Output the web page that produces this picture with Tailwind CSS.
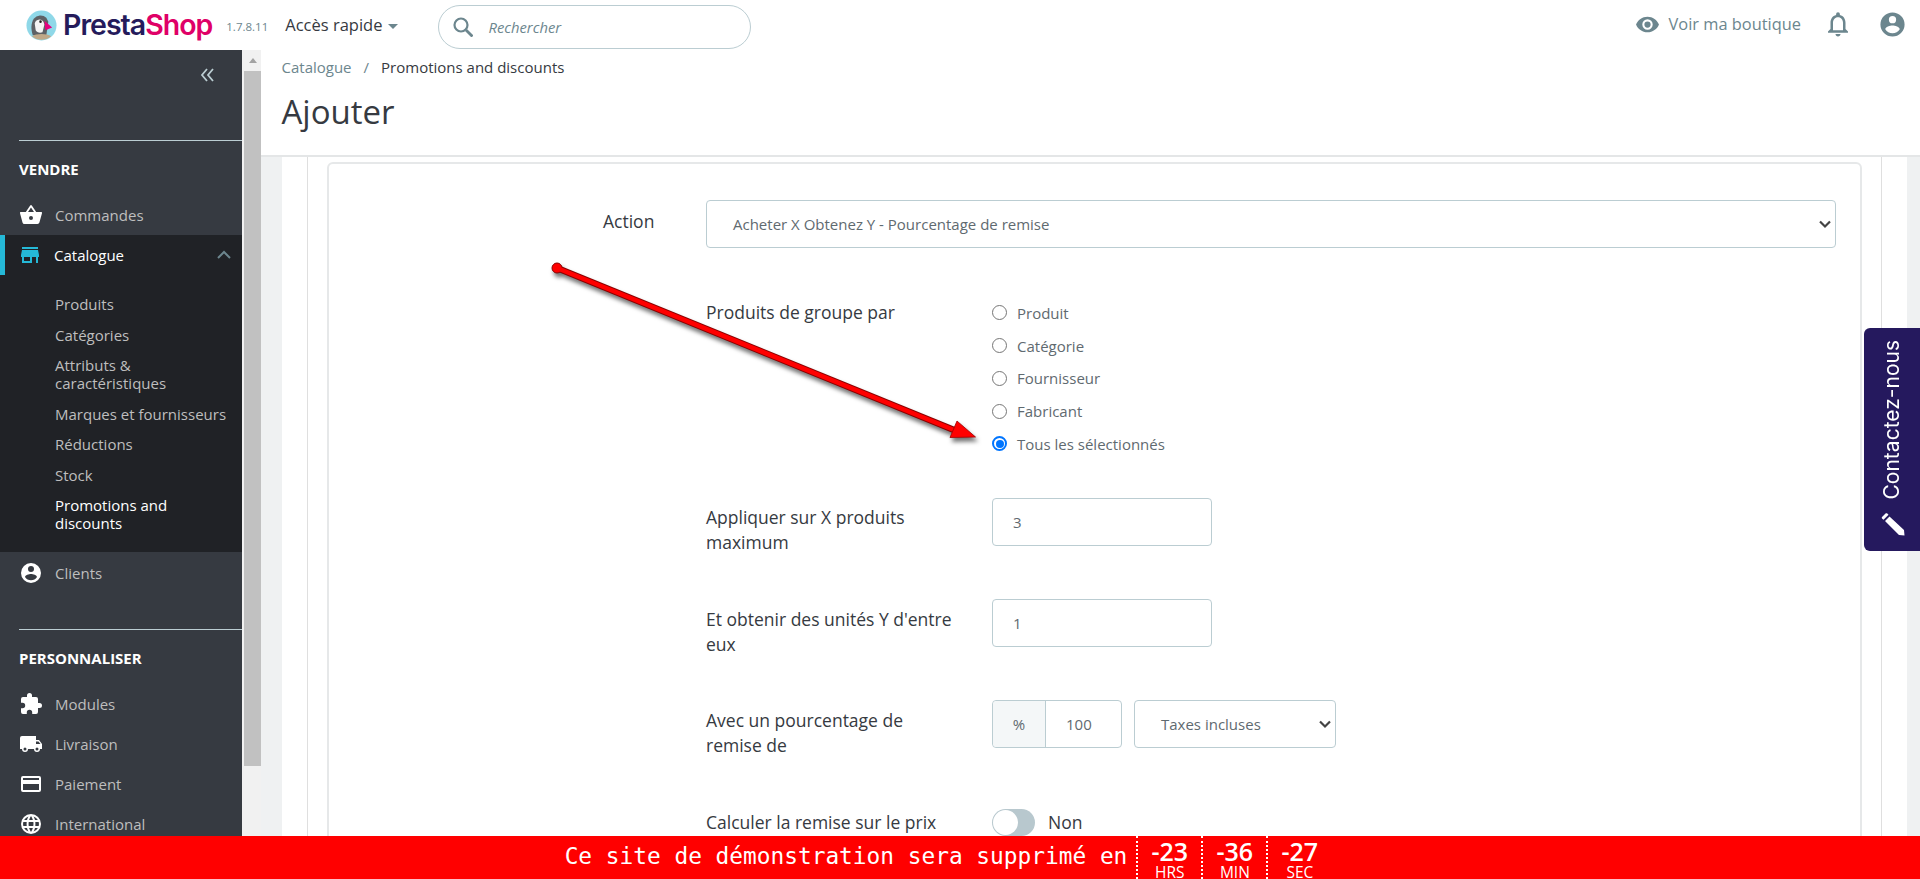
<!DOCTYPE html>
<html lang="fr"><head><meta charset="utf-8">
<script src="https://cdn.jsdelivr.net/npm/@tailwindcss/browser@4"></script>
</head>
<body class="h-[879px] w-[1920px] overflow-hidden bg-white font-['Open_Sans',sans-serif] text-[#363a41]">
<div class="relative flex h-[879px] flex-col overflow-hidden">
<header class="flex h-[50px] shrink-0 items-center bg-white">
  <svg class="ml-[26px] h-[31px] w-[31px]" viewBox="0 0 32 32"><circle cx="16" cy="16" r="15.500" fill="#8fd8e8"/><path d="M7 26c-2-6-2-12 1-17a9 9 0 0 1 13-1l2 4-2 14z" fill="#5d6165"/><path d="M9 14a5 5 0 0 1 9-2l1 3-2 8c-3 1-6 0-7-2z" fill="#f4f4f4"/><circle cx="15" cy="12" r="1.300" fill="#222"/><path d="m19 11 8 7-7 3z" fill="#e6007e"/><path d="M6 27c5-3 15-3 20 0a15.500 15.500 0 0 1-20 0z" fill="#bfa888"/></svg>
  <span class="ml-[6px] font-['Inter',sans-serif] text-[28.500px] leading-none font-semibold tracking-[-1px] text-[#251b5b]">Presta<span class="text-[#df0067]">Shop</span></span>
  <span class="ml-[14px] mt-[4px] text-[11.500px] text-[#6c868e]">1.7.8.11</span>
  <span class="ml-[17px] text-[16.500px] text-[#363a41]">Accès rapide</span>
  <span class="ml-[6px] mt-[2px] h-0 w-0 border-x-[5px] border-t-[5px] border-x-transparent border-t-[#6c868e]"></span>
  <div class="ml-[40px] mt-[4px] flex h-[44px] w-[313px] items-center rounded-[22px] border border-[#bbcdd2]">
    <svg class="ml-[14px] h-[20px] w-[20px]" viewBox="0 0 20 20" fill="none" stroke="#6c868e" stroke-width="2.200"><circle cx="8" cy="8" r="6.500"/><path d="m13 13 6.500 6.500" stroke-width="2.800"/></svg>
    <span class="ml-[15px] text-[14.800px] text-[#6c868e] italic">Rechercher</span>
  </div>
  <div class="ml-auto mt-[-2px] flex items-center">
    <svg class="h-[25px] w-[25px]" viewBox="0 0 24 24" fill="#6c868e"><path d="M12 4.500C7 4.500 2.700 7.600 1 12c1.700 4.400 6 7.500 11 7.500s9.300-3.100 11-7.500c-1.700-4.400-6-7.500-11-7.500zM12 17a5 5 0 1 1 0-10 5 5 0 0 1 0 10zm0-8a3 3 0 1 0 0 6 3 3 0 0 0 0-6z"/></svg>
    <span class="ml-[9px] text-[16.400px] text-[#6c868e]">Voir ma boutique</span>
    <svg class="ml-[22px] h-[30px] w-[30px]" viewBox="0 0 24 24" fill="#6c868e"><path d="M12 22c1.100 0 2-.9 2-2h-4c0 1.100.9 2 2 2zm6-6v-5c0-3.100-1.600-5.600-4.500-6.300V4a1.500 1.500 0 0 0-3 0v.7C7.600 5.400 6 7.900 6 11v5l-2 2v1h16v-1zm-2 1H8v-6c0-2.500 1.500-4.500 4-4.500s4 2 4 4.500z"/></svg>
    <svg class="ml-[25px] mr-[13px] h-[29px] w-[29px]" viewBox="0 0 24 24" fill="#6c868e"><path d="M12 2a10 10 0 1 0 0 20 10 10 0 0 0 0-20zm0 3a3 3 0 1 1 0 6 3 3 0 0 1 0-6zm0 14.200a7.200 7.200 0 0 1-6-3.200c0-2 4-3.100 6-3.100s6 1.100 6 3.100a7.200 7.200 0 0 1-6 3.200z"/></svg>
  </div>
</header>
<div class="flex min-h-0 flex-1">
  <aside class="flex w-[242px] shrink-0 flex-col overflow-hidden bg-[#363a41]">
    <div class="flex h-[50px] shrink-0 items-center justify-end pr-[27px]"><svg class="h-[16px] w-[16px]" viewBox="0 0 16 16" fill="none" stroke="#bbcdd2" stroke-width="1.800"><path d="M8 2 3 8l5 6M14 2 9 8l5 6"/></svg></div>
    <div class="ml-[19px] mt-[40px] shrink-0 border-t border-[#bbcdd2]"></div>
    <div class="ml-[19px] mt-[17.500px] shrink-0 text-[15px] leading-[20px] font-bold text-white">VENDRE</div>
    <a class="mt-[16.500px] flex h-[40px] shrink-0 items-center pl-[19px] text-[15px] text-[#bebebe]"><svg class="h-[24px] w-[24px]" viewBox="0 0 24 24" fill="#fff"><path d="M17.200 9 12.800 2.500a1 1 0 0 0-1.600 0L6.800 9H2a1 1 0 0 0-1 1.300l2.500 9.200A2 2 0 0 0 5.500 21h13a2 2 0 0 0 1.900-1.500l2.600-9.200A1 1 0 0 0 22 9zM9 9l3-4.400L15 9zm3 8a2 2 0 1 1 0-4 2 2 0 0 1 0 4z"/></svg><span class="ml-[12px]">Commandes</span></a>
    <div class="h-[317px] shrink-0 bg-[#202226]">
      <div class="flex h-[40px] items-center border-l-[5px] border-[#25b9d7] pl-[13px] text-[15px] text-white"><svg class="h-[24px] w-[24px]" viewBox="0 0 24 24" fill="#25b9d7"><path d="M20 4H4v2h16zm1 10v-2l-1-5H4l-1 5v2h1v6h10v-6h4v6h2v-6zm-9 4H6v-4h6z"/></svg><span class="ml-[12px]">Catalogue</span><svg class="ml-auto mr-[11px] h-[14px] w-[14px]" viewBox="0 0 14 14" fill="none" stroke="#6c868e" stroke-width="2"><path d="m1 10 6-6 6 6"/></svg></div>
      <ul class="mt-[13.750px] flex flex-col pl-[55px] text-[15px] leading-[18px] text-[#bebebe]">
        <li class="py-[6.250px]">Produits</li>
        <li class="py-[6.250px]">Catégories</li>
        <li class="w-[150px] py-[6.250px]">Attributs &amp; caractéristiques</li>
        <li class="py-[6.250px] whitespace-nowrap">Marques et fournisseurs</li>
        <li class="py-[6.250px]">Réductions</li>
        <li class="py-[6.250px]">Stock</li>
        <li class="w-[150px] py-[6.250px] text-white">Promotions and discounts</li>
      </ul>
    </div>
    <a class="mt-[1px] flex h-[40px] shrink-0 items-center pl-[19px] text-[15px] text-[#bebebe]"><svg class="h-[24px] w-[24px]" viewBox="0 0 24 24" fill="#fff"><path d="M12 2a10 10 0 1 0 0 20 10 10 0 0 0 0-20zm0 3a3 3 0 1 1 0 6 3 3 0 0 1 0-6zm0 14.200a7.200 7.200 0 0 1-6-3.200c0-2 4-3.100 6-3.100s6 1.100 6 3.100a7.200 7.200 0 0 1-6 3.200z"/></svg><span class="ml-[12px]">Clients</span></a>
    <div class="ml-[19px] mt-[36px] shrink-0 border-t border-[#bbcdd2]"></div>
    <div class="ml-[19px] mt-[18px] shrink-0 text-[15px] leading-[20px] font-bold text-white">PERSONNALISER</div>
    <a class="mt-[16px] flex h-[40px] shrink-0 items-center pl-[19px] text-[15px] text-[#bebebe]"><svg class="h-[24px] w-[24px]" viewBox="0 0 24 24" fill="#fff"><path d="M20.500 11H19V7a2 2 0 0 0-2-2h-4V3.500a2.500 2.500 0 0 0-5 0V5H4a2 2 0 0 0-2 2v3.800h1.500a2.700 2.700 0 0 1 0 5.400H2V20a2 2 0 0 0 2 2h3.800v-1.500a2.700 2.700 0 0 1 5.400 0V22H17a2 2 0 0 0 2-2v-4h1.500a2.500 2.500 0 0 0 0-5z"/></svg><span class="ml-[12px]">Modules</span></a>
    <a class="flex h-[40px] shrink-0 items-center pl-[19px] text-[15px] text-[#bebebe]"><svg class="h-[24px] w-[24px]" viewBox="0 0 24 24" fill="#fff"><path d="M20 8h-3V4H3a2 2 0 0 0-2 2v11h2a3 3 0 0 0 6 0h6a3 3 0 0 0 6 0h2v-5zM6 18.500a1.500 1.500 0 1 1 0-3 1.500 1.500 0 0 1 0 3zm12 0a1.500 1.500 0 1 1 0-3 1.500 1.500 0 0 1 0 3zM17 12V9.500h2.500l2 2.500z"/></svg><span class="ml-[12px]">Livraison</span></a>
    <a class="flex h-[40px] shrink-0 items-center pl-[19px] text-[15px] text-[#bebebe]"><svg class="h-[24px] w-[24px]" viewBox="0 0 24 24" fill="#fff"><path d="M20 4H4a2 2 0 0 0-2 2v12a2 2 0 0 0 2 2h16a2 2 0 0 0 2-2V6a2 2 0 0 0-2-2zm0 14H4v-6h16zm0-10H4V6h16z"/></svg><span class="ml-[12px]">Paiement</span></a>
    <a class="flex h-[40px] shrink-0 items-center pl-[19px] text-[15px] text-[#bebebe]"><svg class="h-[24px] w-[24px]" viewBox="0 0 24 24" fill="#fff"><path d="M12 2a10 10 0 1 0 0 20 10 10 0 0 0 0-20zm6.900 6H16a16 16 0 0 0-1.400-3.600A8 8 0 0 1 18.900 8zM12 4c.8 1.200 1.500 2.500 1.900 4h-3.800c.4-1.500 1.100-2.800 1.900-4zM4.300 14a8 8 0 0 1 0-4h3.400a17 17 0 0 0 0 4zm.8 2H8a16 16 0 0 0 1.400 3.600A8 8 0 0 1 5.100 16zM8 8H5.100a8 8 0 0 1 4.300-3.600A16 16 0 0 0 8 8zm4 12c-.8-1.200-1.500-2.500-1.900-4h3.800c-.4 1.500-1.100 2.800-1.900 4zm2.300-6H9.700a15 15 0 0 1 0-4h4.700a15 15 0 0 1-.1 4zm.3 5.600A16 16 0 0 0 16 16h2.900a8 8 0 0 1-4.300 3.600zm1.700-5.600a17 17 0 0 0 0-4h3.400a8 8 0 0 1 0 4z"/></svg><span class="ml-[12px]">International</span></a>
  </aside>
  <div class="flex w-[19px] shrink-0 flex-col bg-[#f1f1f1] pl-[2px]">
    <div class="flex h-[21px] shrink-0 items-center justify-center"><span class="h-0 w-0 border-x-[4px] border-b-[5px] border-x-transparent border-b-[#a3a3a3]"></span></div>
    <div class="h-[695px] shrink-0 bg-[#c1c1c1]"></div>
  </div>
  <main class="flex min-w-0 flex-1 flex-col">
    <div class="h-[107px] shrink-0 border-b-2 border-[#e4e6e7] bg-white pl-[20.500px]">
      <div class="flex pt-[7px] text-[15px] leading-[20px]"><span class="text-[#6c868e]">Catalogue</span><span class="mx-[12px] text-[#6c868e]">/</span><span>Promotions and discounts</span></div>
      <h1 class="mt-[11px] text-[33px] leading-[48px] font-normal">Ajouter</h1>
    </div>
    <div class="flex min-h-0 flex-1 bg-[#eff1f2] pl-[21px] pr-[13px]">
      <div class="flex min-w-0 flex-1 bg-white pl-[25px] pr-[25px]">
        <div class="flex min-w-0 flex-1 border-x border-[#dfdfdf] pl-[19px] pt-[5px]">
          <div class="h-[800px] w-[1535px] rounded-t-[6px] border-2 border-[#e6e8e9] bg-white">
            <div class="relative -m-px">
              <span class="absolute left-[275px] top-[46px] text-[17.500px] leading-[24px]">Action</span>
              <div class="absolute left-[378px] top-[37px] flex h-[48px] w-[1130px] items-center rounded-[4px] border border-[#bbcdd2] pl-[26px] text-[15px] text-[#5f6a70]">Acheter X Obtenez Y - Pourcentage de remise
                <svg class="ml-auto mr-[4px] h-[12px] w-[12px]" viewBox="0 0 12 12" fill="none" stroke="#444" stroke-width="2.200"><path d="m1 3.500 5 5 5-5"/></svg>
              </div>
              <span class="absolute left-[378px] top-[137px] text-[17.500px] leading-[24px]">Produits de groupe par</span>
              <div class="absolute left-[664px] top-[133.500px] flex flex-col text-[15px] leading-[20px] text-[#5f6a70]">
                <label class="flex h-[32.750px] items-center"><span class="h-[15px] w-[15px] rounded-full border border-[#767676]"></span><span class="ml-[10px]">Produit</span></label>
                <label class="flex h-[32.750px] items-center"><span class="h-[15px] w-[15px] rounded-full border border-[#767676]"></span><span class="ml-[10px]">Catégorie</span></label>
                <label class="flex h-[32.750px] items-center"><span class="h-[15px] w-[15px] rounded-full border border-[#767676]"></span><span class="ml-[10px]">Fournisseur</span></label>
                <label class="flex h-[32.750px] items-center"><span class="h-[15px] w-[15px] rounded-full border border-[#767676]"></span><span class="ml-[10px]">Fabricant</span></label>
                <label class="flex h-[32.750px] items-center"><span class="flex h-[15px] w-[15px] items-center justify-center rounded-full border-2 border-[#0075ff]"><span class="h-[8px] w-[8px] rounded-full bg-[#0075ff]"></span></span><span class="ml-[10px]">Tous les sélectionnés</span></label>
              </div>
              <span class="absolute left-[378px] top-[342px] w-[240px] text-[17.500px] leading-[25px]">Appliquer sur X produits maximum</span>
              <div class="absolute left-[664px] top-[335px] flex h-[48px] w-[220px] items-center rounded-[4px] border border-[#bbcdd2] pl-[20px] text-[15px] text-[#5f6a70]">3</div>
              <span class="absolute left-[378px] top-[444px] w-[250px] text-[17.500px] leading-[25px]">Et obtenir des unités Y d'entre eux</span>
              <div class="absolute left-[664px] top-[436px] flex h-[48px] w-[220px] items-center rounded-[4px] border border-[#bbcdd2] pl-[20px] text-[15px] text-[#5f6a70]">1</div>
              <span class="absolute left-[378px] top-[545px] w-[240px] text-[17.500px] leading-[25px]">Avec un pourcentage de remise de</span>
              <div class="absolute left-[664px] top-[537px] flex h-[48px] w-[130px] items-center rounded-[4px] border border-[#bbcdd2] text-[15px] text-[#5f6a70]">
                <span class="flex h-full w-[53px] items-center justify-center rounded-l-[4px] border-r border-[#bbcdd2] bg-[#f4f7f8]">%</span><span class="ml-[20px]">100</span>
              </div>
              <div class="absolute left-[806px] top-[537px] flex h-[48px] w-[202px] items-center rounded-[4px] border border-[#bbcdd2] pl-[26px] text-[15px] text-[#5f6a70]">Taxes incluses
                <svg class="ml-auto mr-[4px] h-[12px] w-[12px]" viewBox="0 0 12 12" fill="none" stroke="#444" stroke-width="2.200"><path d="m1 3.500 5 5 5-5"/></svg>
              </div>
              <span class="absolute left-[378px] top-[647px] whitespace-nowrap text-[17.500px] leading-[25px]">Calculer la remise sur le prix</span>
              <div class="absolute left-[664px] top-[646px] flex h-[27px] w-[43px] items-center rounded-[14px] bg-[#b8c8ce] pl-[1px]"><span class="h-[25px] w-[25px] rounded-full bg-white"></span></div>
              <span class="absolute left-[720px] top-[647px] text-[17.500px] leading-[25px]">Non</span>
            </div>
          </div>
        </div>
      </div>
    </div>
  </main>
</div>
<footer class="flex h-[43px] shrink-0 items-center justify-center bg-[#ff0000] pr-[24px] text-white">
  <span class="mb-[3px] font-['DejaVu_Sans_Mono',monospace] text-[22.800px]">Ce site de démonstration sera supprimé en</span>
  <div class="ml-[9px] flex h-full">
    <div class="flex w-[65px] flex-col items-center border-l-2 border-dotted border-white pt-[1.500px]"><span class="text-[25px] leading-[27px] font-semibold">-23</span><span class="text-[15.500px] leading-[14px]">HRS</span></div>
    <div class="flex w-[65px] flex-col items-center border-l-2 border-dotted border-white pt-[1.500px]"><span class="text-[25px] leading-[27px] font-semibold">-36</span><span class="text-[15.500px] leading-[14px]">MIN</span></div>
    <div class="flex w-[65px] flex-col items-center border-l-2 border-dotted border-white pt-[1.500px]"><span class="text-[25px] leading-[27px] font-semibold">-27</span><span class="text-[15.500px] leading-[14px]">SEC</span></div>
  </div>
</footer>
<!-- Annotation arrow over the page -->
<svg class="absolute left-0 top-0 h-[879px] w-[1920px] drop-shadow-[2px_4px_2px_rgba(0,0,0,0.55)]" viewBox="0 0 1920 879" fill="none">
  <path d="M557 268 954 430" stroke="#8a0000" stroke-width="6.500"/>
  <circle cx="557" cy="268" r="5" fill="#ff0000" stroke="#8a0000"/>
  <path d="M557 268 954 430" stroke="#ff0000" stroke-width="4.500"/>
  <path d="m957 421 18.500 16-25.500.5z" fill="#ff0000" stroke="#a00000" stroke-width=".8"/>
</svg>
<!-- Fixed contact tab -->
<div class="absolute right-0 top-[328px] flex h-[223px] w-[56px] flex-col items-center justify-end rounded-l-[6px] bg-[#25195e] pb-[15px] text-white">
  <span class="mb-[-1px] rotate-180 font-['Inter',sans-serif] text-[21px] leading-[24px] [writing-mode:vertical-rl]">Contactez-nous</span>
  <svg class="ml-[2px] mt-[14px] h-[24px] w-[24px]" viewBox="0 0 24 24" fill="#fff"><path d="M1 5 4.500 1.500c.6-.5 1.300-.5 1.800 0L7.500 2.700 2.500 7.700 1 6.400c-.4-.4-.4-1 0-1.400zM8.500 4.500 4 9l14 14 5.500.5L23 18z"/></svg>
</div>
</div>
</body></html>
